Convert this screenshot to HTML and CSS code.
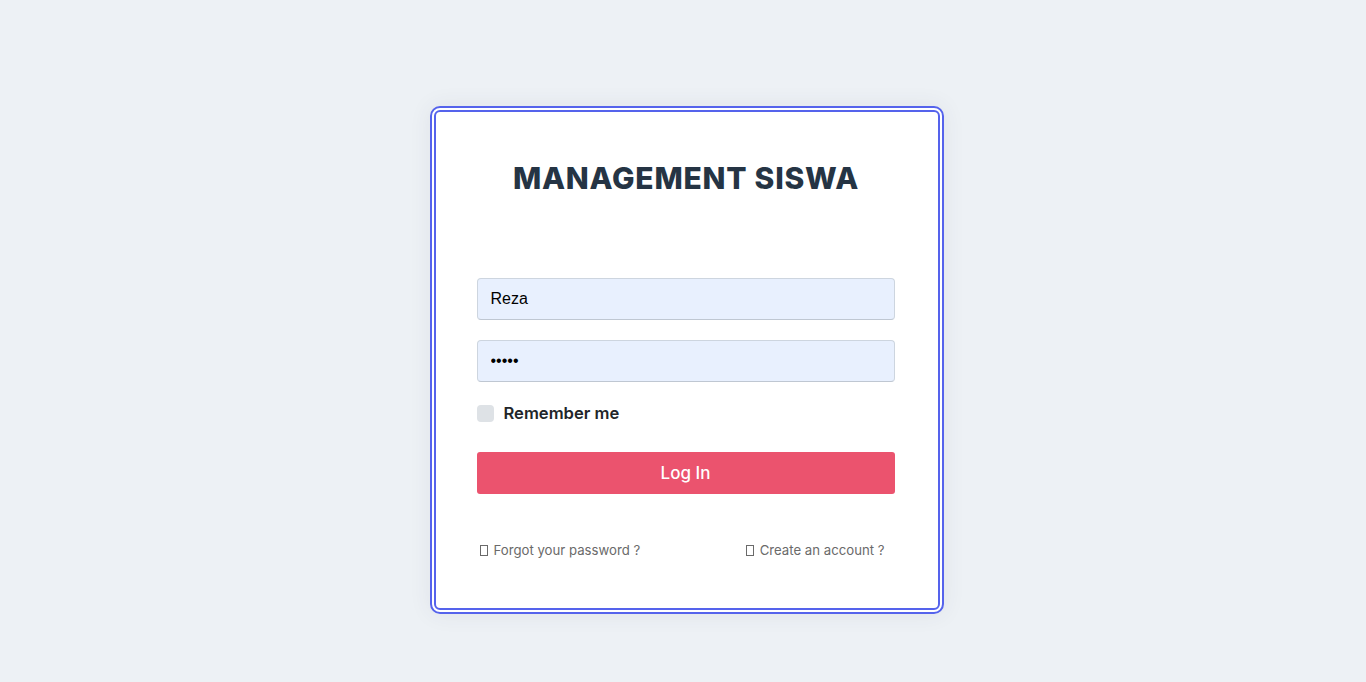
FILE: index.html
```html
<!DOCTYPE html>
<html lang="id">
<head>
<meta charset="utf-8">
<title>Management Siswa - Login</title>
<link rel="stylesheet" href="styles.css">
</head>
<body>
<main class="page">
  <form class="card">
    <h1 class="title">MANAGEMENT SISWA</h1>
    <div class="fields">
      <input class="field" type="text" value="Reza">
      <input class="field" type="password" value="reza1">
    </div>
    <label class="remember">
      <span class="check"></span>
      <span class="remember-text">Remember me</span>
    </label>
    <button class="btn" type="button">Log In</button>
    <div class="links">
      <a class="link link-left" href="#"><span class="ico"></span>Forgot your password ?</a>
      <a class="link link-right" href="#"><span class="ico"></span>Create an account ?</a>
    </div>
  </form>
</main>
</body>
</html>
```

FILE: styles.css
```css
* { box-sizing: border-box; }

html, body {
  margin: 0;
  padding: 0;
  height: 100%;
}

body {
  background: #edf1f5;
  font-family: "Inter", "Liberation Sans", sans-serif;
}

.page {
  display: flex;
  justify-content: center;
  padding-top: 106px;
  padding-left: 7px;
}

.card {
  width: 514px;
  background: #ffffff;
  border: 6px double #5563ec;
  border-radius: 10px;
  padding: 48px 42px 48px 41px;
  box-shadow: 0 0 22px rgba(60, 70, 90, 0.08);
  display: flex;
  flex-direction: column;
}

.title {
  margin: 0;
  text-align: center;
  font-size: 30px;
  line-height: 36px;
  font-weight: 800;
  letter-spacing: 0.75px;
  color: #253444;
}

.fields {
  margin-top: 82px;
  display: flex;
  flex-direction: column;
  gap: 20px;
}

.field {
  display: block;
  width: 418px;
  height: 42px;
  border: 1px solid #cdd5df;
  border-bottom-color: #bfc7d2;
  border-radius: 4px;
  background: #e8f0fe;
  padding: 0 13px;
  font-family: "Liberation Sans", Arial, sans-serif;
  font-size: 16px;
  color: #000;
  outline: none;
}

.remember {
  margin-top: 21px;
  display: flex;
  align-items: center;
  height: 20px;
}

.check {
  width: 17px;
  height: 17px;
  border-radius: 4px;
  background: #dee2e6;
  margin-right: 10px;
}

.remember-text {
  font-size: 16.6px;
  font-weight: 600;
  color: #212529;
  line-height: 20px;
}

.btn {
  margin-top: 29px;
  width: 418px;
  height: 42px;
  border: none;
  border-radius: 3px;
  background: #eb536e;
  color: #ffffff;
  font-family: "Inter", "Liberation Sans", sans-serif;
  font-size: 17px;
  font-weight: 500;
}

.links {
  margin-top: 46px;
  display: flex;
  height: 20px;
  align-items: center;
}

.link {
  display: inline-flex;
  align-items: center;
  font-size: 13.2px;
  color: #6a6a6a;
  text-decoration: none;
  line-height: 20px;
}

.link-left {
  margin-left: 3px;
}

.link-right {
  margin-left: auto;
  margin-right: 11px;
}

.ico {
  display: inline-block;
  width: 8px;
  height: 11px;
  border: 1px solid #6a6a6a;
  margin-right: 6px;
}
```
